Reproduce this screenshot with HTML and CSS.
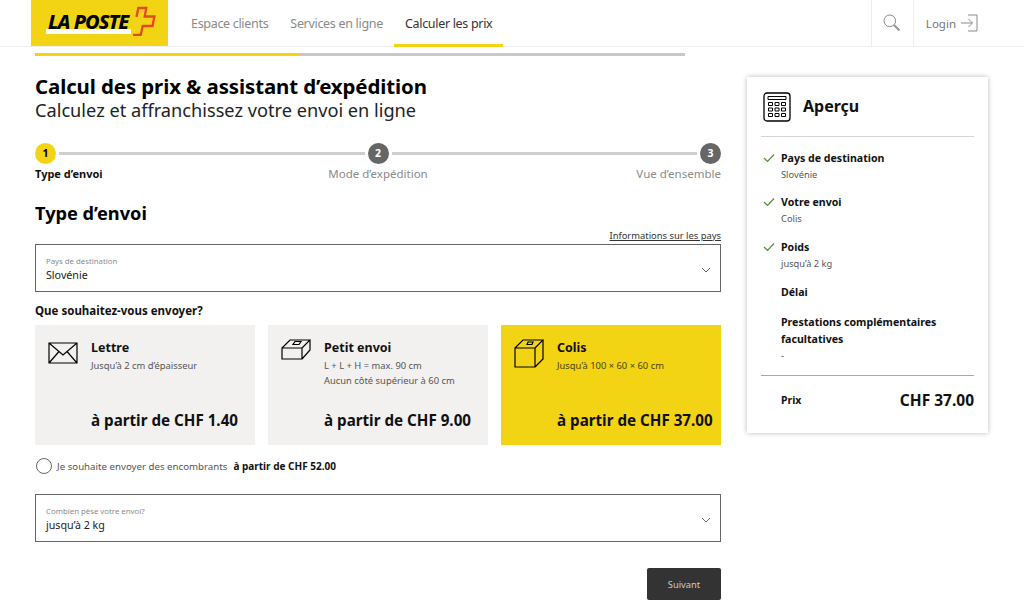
FILE: index.html
```html
<!DOCTYPE html>
<html lang="fr">
<head>
<meta charset="utf-8">
<title>Calcul des prix</title>
<link rel="stylesheet" href="styles.css">
</head>
<body>
<header class="topbar">
  <a class="logo">
    <span class="logo-text">LA POSTE</span>
    <svg class="logo-cross" width="26" height="30" viewBox="0 0 26 30"><path d="M4.500 11 6.300 2h8l-1.600 8.500h9.700l-1.900 9.500h-9.800l-2 9H1" fill="none" stroke="#e4481d" stroke-width="2.300"/></svg>
  </a>
  <nav class="nav">
    <a class="nav-item">Espace clients</a>
    <a class="nav-item">Services en ligne</a>
    <a class="nav-item active">Calculer les prix</a>
  </nav>
  <div class="tools">
    <div class="search-cell">
      <svg width="18" height="18" viewBox="0 0 18 18"><circle cx="6.800" cy="6.800" r="5.800" fill="none" stroke="#8a8a8a"/><path d="M11 11l5.500 5.500" stroke="#9a9a9a" stroke-width="2.200" fill="none"/></svg>
    </div>
    <div class="login">
      <span>Login</span>
      <svg width="18" height="18" viewBox="0 0 18 18"><path d="M8 1h9v16H8M1 9h11M8.500 5l4 4-4 4" fill="none" stroke="#8a8a8a"/></svg>
    </div>
  </div>
</header>

<div class="page">
  <main class="main">
    <div class="progress"><div class="progress-fill"></div></div>
    <h1 class="title">Calcul des prix &amp; assistant d’expédition</h1>
    <p class="subtitle">Calculez et affranchissez votre envoi en ligne</p>

    <div class="stepper">
      <span class="dot current">1</span><span class="line"></span>
      <span class="dot">2</span><span class="line"></span>
      <span class="dot">3</span>
    </div>
    <div class="step-labels">
      <span class="step-label current">Type d’envoi</span>
      <span class="step-label center">Mode d’expédition</span>
      <span class="step-label end">Vue d’ensemble</span>
    </div>

    <h2 class="section">Type d’envoi</h2>
    <div class="info-row"><a class="info-link">Informations sur les pays</a></div>

    <div class="select">
      <div>
        <div class="select-label">Pays de destination</div>
        <div class="select-value">Slovénie</div>
      </div>
      <svg class="chevron" width="10" height="6" viewBox="0 0 10 6"><path d="M1 1l4 4 4-4" fill="none" stroke="#666"/></svg>
    </div>

    <h3 class="question">Que souhaitez-vous envoyer?</h3>

    <div class="cards">
      <div class="card">
        <svg class="card-icon" width="30" height="30" viewBox="0 0 30 30"><path d="M1 5h28v20H1zM1 5l14 12L29 5M1 25l10-11.500M29 25 19 13.500" fill="none" stroke="#000" stroke-width="1.200"/></svg>
        <div class="card-body">
          <div class="card-title">Lettre</div>
          <div class="card-sub">Jusqu’à 2 cm d’épaisseur</div>
          <div class="card-price">à partir de CHF 1.40</div>
        </div>
      </div>
      <div class="card">
        <svg class="card-icon" width="30" height="30" viewBox="0 0 30 30"><path d="M1 10h20v11H1zM1 10 9 2h20l-8 8M29 2v10l-8 9M14 3.500h6l-2 3h-6z" fill="none" stroke="#000" stroke-width="1.200"/></svg>
        <div class="card-body">
          <div class="card-title">Petit envoi</div>
          <div class="card-sub">L + L + H = max. 90 cm<br>Aucun côté supérieur à 60 cm</div>
          <div class="card-price">à partir de CHF 9.00</div>
        </div>
      </div>
      <div class="card selected">
        <svg class="card-icon" width="30" height="30" viewBox="0 0 30 30"><path d="M1 10h20v19H1zM1 10l8-8h20l-8 8M29 2v19l-8 8M14 4h5l-1 2.500h-5z" fill="none" stroke="#000" stroke-width="1.200"/></svg>
        <div class="card-body">
          <div class="card-title">Colis</div>
          <div class="card-sub">Jusqu’à 100 × 60 × 60 cm</div>
          <div class="card-price">à partir de CHF 37.00</div>
        </div>
      </div>
    </div>

    <div class="radio-row">
      <span class="radio"></span>
      <span class="radio-text">Je souhaite envoyer des encombrants</span>
      <strong class="radio-price">à partir de CHF 52.00</strong>
    </div>

    <div class="select">
      <div>
        <div class="select-label">Combien pèse votre envoi?</div>
        <div class="select-value">jusqu’à 2 kg</div>
      </div>
      <svg class="chevron" width="10" height="6" viewBox="0 0 10 6"><path d="M1 1l4 4 4-4" fill="none" stroke="#666"/></svg>
    </div>

    <div class="actions"><button class="next">Suivant</button></div>
  </main>

  <aside class="summary">
    <div class="summary-head">
      <svg width="28" height="30" viewBox="0 0 28 30"><rect x="1" y="1" width="26" height="28" rx="3" fill="none" stroke="#000" stroke-width="1.300"/><path d="M5 4.500h18v3H5zM5.500 10.500h4v3h-4zM12 10.500h4v3h-4zM18.500 10.500h4v3h-4zM5.500 16h4v3h-4zM12 16h4v3h-4zM18.500 16h4v3h-4zM5.500 21.500h4v3h-4zM12 21.500h4v3h-4zM18.500 21.500h4v3h-4z" fill="none" stroke="#000"/></svg>
      <span class="summary-title">Aperçu</span>
    </div>
    <ul class="summary-list">
      <li class="row">
        <svg class="check" width="12" height="10" viewBox="0 0 12 10"><path d="M1 5l3.500 3.500L11 1.500" fill="none" stroke="#4f8f35" stroke-width="1.200"/></svg>
        <div class="row-title">Pays de destination</div>
        <div class="row-sub">Slovénie</div>
      </li>
      <li class="row">
        <svg class="check" width="12" height="10" viewBox="0 0 12 10"><path d="M1 5l3.500 3.500L11 1.500" fill="none" stroke="#4f8f35" stroke-width="1.200"/></svg>
        <div class="row-title">Votre envoi</div>
        <div class="row-sub">Colis</div>
      </li>
      <li class="row">
        <svg class="check" width="12" height="10" viewBox="0 0 12 10"><path d="M1 5l3.500 3.500L11 1.500" fill="none" stroke="#4f8f35" stroke-width="1.200"/></svg>
        <div class="row-title">Poids</div>
        <div class="row-sub">jusqu’à 2 kg</div>
      </li>
      <li class="row short">
        <div class="row-title">Délai</div>
      </li>
      <li class="row last">
        <div class="row-title">Prestations complémentaires facultatives</div>
        <div class="row-sub">-</div>
      </li>
    </ul>
    <div class="total">
      <span class="total-label">Prix</span>
      <span class="total-value">CHF 37.00</span>
    </div>
  </aside>
</div>
</body>
</html>
```
FILE: styles.css
```css
* { box-sizing: border-box; }
html, body { margin: 0; padding: 0; }
body {
  width: 1024px;
  height: 608px;
  overflow: hidden;
  background: #fff;
  color: #000;
  font-family: "Noto Sans", "Open Sans", sans-serif;
}
.topbar {
  display: flex;
  height: 47px;
  padding-left: 31px;
  border-bottom: 1px solid #eeeeee;
}
.logo {
  position: relative;
  display: flex;
  align-items: flex-start;
  width: 137px;
  height: 46px;
  padding: 10px 0 0 17px;
  background: #f2d414;
}
.logo::before {
  content: "";
  position: absolute;
  left: 15px;
  top: 29px;
  width: 85px;
  height: 5px;
  background: #fff;
}
.logo-text {
  position: relative;
  font-size: 20px;
  line-height: 24px;
  font-weight: 800;
  font-style: italic;
  letter-spacing: -1px;
  white-space: nowrap;
  color: #000;
}
.logo-cross { position: absolute; left: 101px; top: 6px; }
.nav { display: flex; margin-left: 12px; }
.nav-item {
  display: flex;
  align-items: center;
  height: 47px;
  padding: 2px 11px 0;
  font-size: 12.500px;
  letter-spacing: -0.310px;
  color: #8a8a8a;
  border-bottom: 3px solid transparent;
  white-space: nowrap;
}
.nav-item.active { color: #333; border-bottom-color: #f2d414; }
.tools { display: flex; margin-left: auto; padding-right: 46px; }
.search-cell {
  display: flex;
  align-items: center;
  justify-content: center;
  width: 43px;
  border-left: 1px solid #eeeeee;
  border-right: 1px solid #eeeeee;
}
.login {
  display: flex;
  align-items: center;
  gap: 4px;
  padding-left: 12px;
  font-size: 11.500px;
  color: #777;
}
.page { display: flex; padding-left: 35px; }
.main { width: 686px; flex: none; }
.progress { width: 650px; height: 3px; margin-top: 6px; background: #c8c8c8; }
.progress-fill { width: 265px; height: 3px; background: #f2d414; }
.title { margin: 17px 0 0; font-size: 20.450px; line-height: 27px; font-weight: 700; letter-spacing: -0.100px; }
.subtitle { margin: 0; font-size: 18.200px; line-height: 21px; color: #222; }
.stepper { display: flex; align-items: center; margin-top: 21px; height: 22px; }
.dot {
  display: flex;
  align-items: center;
  justify-content: center;
  flex: none;
  width: 21px;
  height: 21px;
  border-radius: 50%;
  font-size: 10.500px;
  font-weight: 700;
  background: #666;
  color: #fff;
}
.dot.current { background: #f2d414; color: #000; }
.line { flex: 1; height: 3px; margin: 0 3px; background: #cfcfcf; }
.step-labels { display: grid; grid-template-columns: 1fr auto 1fr; margin-top: 1px; }
.step-label { font-size: 11.500px; line-height: 17px; color: #8a8a8a; }
.step-label.current { font-size: 11px; font-weight: 700; color: #111; }
.step-label.end { text-align: right; }
.section { margin: 18px 0 0; font-size: 18.200px; line-height: 26px; font-weight: 700; }
.info-row { display: flex; justify-content: flex-end; margin-top: 3px; }
.info-link { font-size: 9.400px; line-height: 14px; color: #333; text-decoration: underline; }
.select {
  display: flex;
  align-items: center;
  justify-content: space-between;
  height: 48px;
  margin-top: 1px;
  padding: 3px 9px 0 10px;
  border: 1.500px solid #666;
}
.cards + .radio-row + .select { margin-top: 2px; }
.select-label { font-size: 7.800px; line-height: 12px; color: #8a8a8a; }
.select-value { font-size: 10.700px; line-height: 17px; color: #222; }
.chevron { margin-top: 1px; }
.question { margin: 10px 0 0; font-size: 11.500px; line-height: 17px; font-weight: 700; color: #111; }
.cards { display: flex; gap: 13px; margin-top: 6px; }
.card {
  display: flex;
  width: 220px;
  height: 120px;
  padding: 13px 0 0 13px;
  background: #f2f1f0;
}
.card.selected { background: #f2d414; }
.card-icon { flex: none; }
.card-body { display: flex; flex-direction: column; margin-left: 13px; padding-top: 1px; flex: 1; }
.card-title { font-size: 12.500px; line-height: 18px; font-weight: 700; color: #111; }
.card-sub { margin-top: 2px; font-size: 9.400px; line-height: 14.500px; color: #555; }
.selected .card-sub { color: #4a4410; }
.card-price {
  margin-top: auto;
  margin-bottom: 13px;
  font-size: 15.200px;
  line-height: 24px;
  font-weight: 700;
  color: #111;
  white-space: nowrap;
}
.radio-row { display: flex; align-items: center; height: 24px; margin-top: 9px; margin-bottom: 16px; padding-left: 1px; }
.radio { flex: none; width: 16px; height: 16px; border: 1.300px solid #666; border-radius: 50%; background: #fff; }
.radio-text { margin-left: 5px; font-size: 9.700px; color: #555; white-space: nowrap; }
.radio-price { margin-left: 6px; font-size: 10px; font-weight: 700; color: #111; white-space: nowrap; }
.actions { display: flex; justify-content: flex-end; margin-top: 26px; }
.next {
  width: 74px;
  height: 32px;
  padding: 0;
  border: 0;
  border-radius: 2px;
  background: #333;
  color: #ccc;
  font-family: inherit;
  font-size: 9.300px;
}
.summary {
  flex: none;
  width: 241px;
  height: 356px;
  margin: 30px 0 0 26px;
  padding: 15px 14px 0;
  background: #fff;
  box-shadow: 0 0 5px rgba(0, 0, 0, 0.28);
}
.summary-head {
  display: flex;
  align-items: center;
  gap: 12px;
  height: 45px;
  padding: 0 0 15px 2px;
  border-bottom: 1px solid #d4d4d4;
}
.summary-title { font-size: 16px; line-height: 22px; margin-top: -2px; font-weight: 700; color: #111; }
.summary-list { list-style: none; margin: 0; padding: 12.500px 0 0; }
.row { position: relative; padding-left: 20px; height: 44.700px; }
.row.short { height: 30px; }
.row.last { height: 61.500px; }
.check { position: absolute; left: 2px; top: 3px; }
.row-title { font-size: 10.600px; line-height: 17px; font-weight: 700; color: #111; }
.row-sub { font-size: 9.300px; line-height: 15px; color: #555; }
.total {
  display: flex;
  align-items: center;
  justify-content: space-between;
  height: 49px;
  padding-left: 20px;
  border-top: 1px solid #a8a8a8;
}
.total-label { font-size: 10.500px; font-weight: 700; color: #111; }
.total-value { font-size: 15.500px; font-weight: 700; color: #111; }
```
